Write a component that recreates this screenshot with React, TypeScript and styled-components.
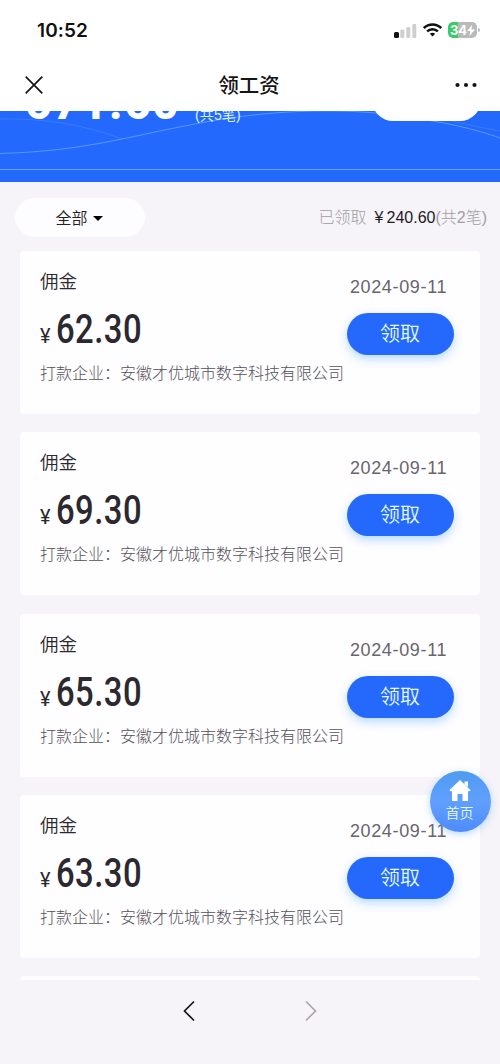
import React from "react";
import styled, { createGlobalStyle } from "styled-components";

const GlobalStyle = createGlobalStyle`
  * { box-sizing: border-box; }
  body {
    margin: 0;
    background: #f6f3f9;
    font-family: "Liberation Sans", "Noto Sans CJK SC", sans-serif;
    color: #2b292d;
  }
`;

const Screen = styled.main`
  position: relative;
  width: 500px;
  height: 1064px;
  display: flex;
  flex-direction: column;
  overflow: hidden;
`;

const StatusBar = styled.header`
  flex: none;
  height: 60px;
  padding: 0 23px 0 37px;
  display: flex;
  align-items: center;
  justify-content: space-between;
  background: #fff;
`;

const Clock = styled.span`
  margin-top: 2px;
  font: 600 19px/24px Inter, sans-serif;
  letter-spacing: 0.1px;
  color: #111;
`;

const StatusIcons = styled.div`
  display: flex;
  align-items: center;
  gap: 6px;
`;

const Battery = styled.div`
  position: relative;
  width: 29px;
  height: 16px;
  border-radius: 5px;
  display: flex;
  align-items: center;
  justify-content: center;
  background: linear-gradient(90deg, #3acb68 36%, #bababc 36%);
  color: #fff;
  font: 700 13px/16px Inter, sans-serif;
  &::after {
    content: "";
    position: absolute;
    right: -3px;
    top: 6px;
    width: 2px;
    height: 4px;
    border-radius: 0 2px 2px 0;
    background: #bababc;
  }
`;

const NavBar = styled.nav`
  flex: none;
  height: 51px;
  padding: 0 23px 2px 25px;
  display: grid;
  grid-template-columns: 40px 1fr 40px;
  align-items: center;
  background: #fff;
  & > :last-child { justify-self: end; }
`;

const NavTitle = styled.h1`
  margin: 0;
  padding: 0 4px 2px 0;
  text-align: center;
  font: 500 20.4px/28px "Noto Sans CJK SC", sans-serif;
  color: #151515;
`;

const Hero = styled.section`
  position: relative;
  flex: none;
  height: 71px;
  overflow: hidden;
  display: flex;
  align-items: flex-start;
  padding: 0 20px 0 25px;
  background: #2469fd;
  color: #fff;
`;

const Waves = styled.svg`
  position: absolute;
  inset: 0;
`;

const Balance = styled.strong`
  position: relative;
  width: 170px;
  margin-top: -35px;
  font: 800 46px/54px Roboto, sans-serif;
  letter-spacing: 1.5px;
`;

const BalanceCount = styled.span`
  position: relative;
  margin-top: -7px;
  font-size: 14.2px;
  line-height: 22px;
  color: #d9f3ff;
`;

const HeroButton = styled.div`
  position: relative;
  width: 109px;
  height: 42px;
  margin: -32px -1px 0 auto;
  border-radius: 21px;
  background: #fff;
`;

const FilterRow = styled.div`
  flex: none;
  height: 69px;
  padding: 1px 13px 0 15px;
  display: flex;
  align-items: center;
  justify-content: space-between;
`;

const FilterPill = styled.button`
  width: 130px;
  height: 39px;
  padding: 0 2px 0 0;
  border: 0;
  border-radius: 20px;
  display: flex;
  align-items: center;
  justify-content: center;
  gap: 5px;
  background: #fdfcfe;
  font: 350 16px/24px "Noto Sans CJK SC", sans-serif;
  color: #222;

  svg { margin-top: 2px; }
`;

const Claimed = styled.div`
  display: flex;
  align-items: center;
  padding-top: 1px;
  font-size: 16px;
  line-height: 24px;
  font-weight: 300;
  color: #a19da4;
`;

const ClaimedAmount = styled.span`
  margin-left: 8px;
  color: #1d1b1f;
  font-weight: 400;
`;

const ClaimedYen = styled.span`
  display: inline-block;
  width: 12px;
`;

const CardList = styled.section`
  flex: 1;
  min-height: 0;
  overflow: hidden;
  padding: 0 20px 0 20px;
  display: flex;
  flex-direction: column;
  gap: 18.3px;
`;

const Card = styled.article`
  flex: none;
  height: 163px;
  padding: 16px 26px 0 20px;
  display: flex;
  justify-content: space-between;
  border-radius: 4px;
  background: #fefdff;
`;

const CardInfo = styled.div`
  display: flex;
  flex-direction: column;
  white-space: nowrap;
`;

const CardTitle = styled.h2`
  margin: 0;
  font: 350 18.5px/26px "Noto Sans CJK SC", sans-serif;
`;

const Price = styled.div`
  height: 46px;
  margin-top: 14px;
  display: flex;
  align-items: baseline;
`;

const Yen = styled.span`
  width: 16px;
  font: 400 20px/44px Roboto, sans-serif;
`;

const Amount = styled.strong`
  font: 550 41px/44px Roboto, sans-serif;
  letter-spacing: 0.6px;
  transform: scaleX(0.8);
  transform-origin: left;
`;

const Payer = styled.p`
  margin: 7px 0 0;
  font: 300 16px/24px "Noto Sans CJK SC", sans-serif;
  color: #565358;
`;

const CardSide = styled.div`
  width: 107px;
  padding-top: 8px;
  display: flex;
  flex-direction: column;
  align-items: center;
  gap: 14px;
`;

const DateText = styled.time`
  margin-left: -4px;
  font-size: 18px;
  line-height: 24px;
  letter-spacing: 0.65px;
  white-space: nowrap;
  color: #69656b;
`;

const ClaimButton = styled.button`
  width: 107px;
  height: 42px;
  padding: 0 1px 2px 0;
  border: 0;
  border-radius: 21px;
  background: #2469fc;
  box-shadow: 0 4px 10px rgba(66, 165, 255, 0.38);
  font: 350 20px/28px "Noto Sans CJK SC", sans-serif;
  color: #e4faff;
`;

const BottomBar = styled.footer`
  flex: none;
  height: 84px;
  padding-top: 20px;
  display: flex;
  justify-content: center;
  gap: 110px;
  background: #f7f4f9;
`;

const HomeButton = styled.button`
  position: absolute;
  left: 430px;
  top: 771px;
  width: 61px;
  height: 61px;
  padding: 8px 2px 0 0;
  border: 0;
  border-radius: 50%;
  display: flex;
  flex-direction: column;
  align-items: center;
  background: linear-gradient(180deg, #4e9cf0, #609fff 50%, #4e8bfb);
  box-shadow: 0 2px 7px rgba(79, 165, 255, 0.4);
  font: 350 14px/20px "Noto Sans CJK SC", sans-serif;
  color: #e5f8ff;
`;

const amounts = ["62.30", "69.30", "65.30", "63.30"];

function PaymentCard({ amount }: { amount: string }) {
  return (
    <Card>
      <CardInfo>
        <CardTitle>佣金</CardTitle>
        <Price>
          <Yen>¥</Yen>
          <Amount>{amount}</Amount>
        </Price>
        <Payer>打款企业：安徽才优城市数字科技有限公司</Payer>
      </CardInfo>
      <CardSide>
        <DateText>2024-09-11</DateText>
        <ClaimButton>领取</ClaimButton>
      </CardSide>
    </Card>
  );
}

function Chevron({ forward = false }: { forward?: boolean }) {
  return (
    <svg width="12" height="22" viewBox="0 0 12 22" fill="none" stroke={forward ? "#aaa6ac" : "#151515"} strokeWidth="1.7">
      <path d={forward ? "M1 1.5 L10.5 11 L1 20.5" : "M11 1.5 L1.5 11 L11 20.5"} />
    </svg>
  );
}

export default function App() {
  return (
    <Screen>
      <GlobalStyle />
      <StatusBar>
        <Clock>10:52</Clock>
        <StatusIcons>
          <svg width="23" height="15" viewBox="0 0 23 15">
            <rect x="0" y="9" width="5" height="6" rx="1.5" fill="#111" />
            <g fill="#cfcfd1">
              <rect x="6.3" y="6.5" width="4" height="8.5" rx="1.2" />
              <rect x="12.3" y="4" width="4" height="11" rx="1.2" />
              <rect x="18.3" y="1" width="4" height="14" rx="1.2" />
            </g>
          </svg>
          <svg width="19" height="14" viewBox="0 0 19 14" fill="none" stroke="#111" strokeWidth="2.6">
            <path d="M.8 5.1 C5.7 .3 13.3 .3 18.2 5.1" />
            <path d="M4.1 8.4 C7.2 5.5 11.8 5.5 14.9 8.4" />
            <path d="M6.8 10.7 Q9.5 8.6 12.2 10.7 L9.5 13.6Z" fill="#111" stroke="none" />
          </svg>
          <Battery>
            34
            <svg width="8" height="11" viewBox="0 0 8 11">
              <path d="M5 0 L0 6 H3.2 L2.4 11 L8 4.5 H4.6Z" fill="#fff" />
            </svg>
          </Battery>
        </StatusIcons>
      </StatusBar>
      <NavBar>
        <svg width="18" height="18" viewBox="0 0 18 18" stroke="#151515" strokeWidth="1.7">
          <path d="M.7 .7 L17.3 17.3 M17.3 .7 L.7 17.3" />
        </svg>
        <NavTitle>领工资</NavTitle>
        <svg width="22" height="6" viewBox="0 0 22 6" fill="#151515">
          <circle cx="2.5" cy="3" r="2.1" />
          <circle cx="11" cy="3" r="2.1" />
          <circle cx="19.5" cy="3" r="2.1" />
        </svg>
      </NavBar>
      <Hero>
        <Waves width="500" height="71" viewBox="0 0 500 71" fill="none" stroke="#70b1ff">
          <path d="M0 42.5 C85 40 125 26 195 13 C265 -1 342 -4 400 5 C445 11 475 18 500 27" opacity=".65" />
          <path d="M0 8 C45 7 85 14 122 28" opacity=".25" />
          <path d="M400 4 C435 4 465 14 500 20" opacity=".25" />
          <path d="M0 58.5 H500" opacity=".85" />
        </Waves>
        <Balance>671.60</Balance>
        <BalanceCount>(共5笔)</BalanceCount>
        <HeroButton />
      </Hero>
      <FilterRow>
        <FilterPill>
          全部
          <svg width="10" height="5" viewBox="0 0 10 5"><path d="M0 0 H10 L5 5Z" fill="#000" /></svg>
        </FilterPill>
        <Claimed>
          已领取
          <ClaimedAmount><ClaimedYen>¥</ClaimedYen>240.60</ClaimedAmount>
          (共2笔)
        </Claimed>
      </FilterRow>
      <CardList>
        {amounts.map((amount) => <PaymentCard key={amount} amount={amount} />)}
        <Card />
      </CardList>
      <BottomBar>
        <Chevron />
        <Chevron forward />
      </BottomBar>
      <HomeButton>
        <svg width="22" height="23" viewBox="0 0 22 23">
          <path d="M11 1 L21.5 11 Q21.5 12.5 19 12.3 V22 H13.5 V15 H8.5 V22 H3 V12.3 Q.5 12.5 .5 11Z M15.5 2.5 H19 V8 L15.5 5Z" fill="#fff" />
        </svg>
        首页
      </HomeButton>
    </Screen>
  );
}
